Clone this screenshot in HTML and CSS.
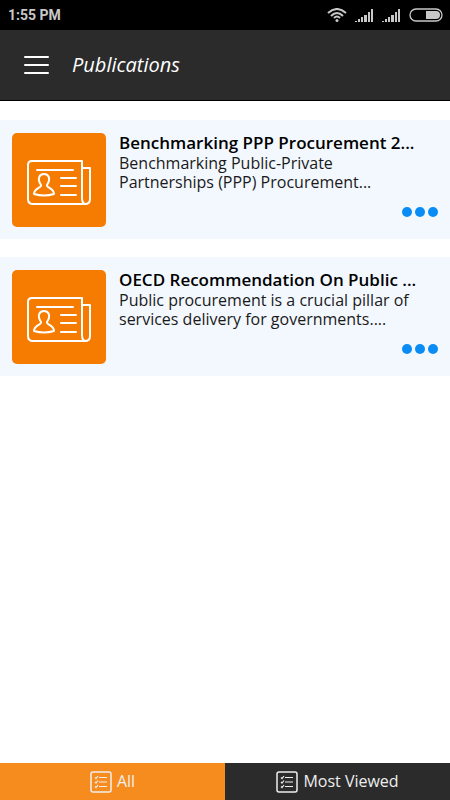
FILE: index.html
```html
<!DOCTYPE html>
<html lang="en">
<head>
  <meta charset="UTF-8">
  <meta name="viewport" content="width=device-width, initial-scale=1.0">
  <title>Publications</title>
  <link rel="stylesheet" href="styles.css">
</head>
<body>

  <!-- Shared icons -->
  <svg class="icon-defs" aria-hidden="true">
    <symbol id="newspaper" viewBox="0 0 94 94">
      <g fill="none" stroke="#fff" stroke-width="2" stroke-linecap="round" stroke-linejoin="round">
        <path d="M70 65V28H20Q16 28 16 32V66Q16 71 21 71H73Q78 71 78 66V35H71M70 65Q70 71 74 71"/>
        <path d="M25 37H61M49 45H64M49 53H64M49 62H64"/>
        <path d="M29 52C25 46 27 41 32 41S39 46 35 52C34 55 42 55 42 61Q32 64 22 61C22 55 30 55 29 52Z"/>
      </g>
    </symbol>
    <symbol id="checklist" viewBox="0 0 22 22">
      <g fill="none" stroke="currentColor">
        <rect x="1" y="1" width="20" height="20" rx="2" stroke-width="1.5"/>
        <path d="M9 6.5H17M9 11H17M9 15.5H17M5 6.5L6 7.5L8 5M5 11L6 12L8 9.500M5 15.5L6 16.5L8 14" stroke-width="1.2"/>
      </g>
    </symbol>
    <symbol id="signal" viewBox="0 0 19 14">
      <path d="M0 14V13H2V14ZM3 14V11H5V14ZM6 14V9H8V14ZM9 14V7H12V14ZM13 14V4H15V14ZM16 14V1H18V14Z" fill="#c8c8c8"/>
    </symbol>
  </svg>

  <div class="app">
    <!-- Status bar -->
    <div class="status-bar">
      <span class="time">1:55 PM</span>
      <div class="status-icons">
        <svg width="20" height="14" viewBox="0 0 20 14" fill="none" stroke="#c8c8c8" stroke-width="2">
          <path d="M1 5Q10 -3 19 5M4 8Q10 2 16 8M7 10Q10 7 13 10"/>
          <circle cx="10" cy="12.500" r="1.500" fill="#c8c8c8" stroke="none"/>
        </svg>
        <svg width="19" height="14"><use href="#signal"/></svg>
        <svg width="19" height="14"><use href="#signal"/></svg>
        <svg width="34" height="14" viewBox="0 0 34 14">
          <rect x="1" y="1" width="32" height="12" rx="6" fill="none" stroke="#c8c8c8" stroke-width="1.300"/>
          <path d="M17 3H27Q31 3 31 7T27 11H17Z" fill="#c8c8c8"/>
        </svg>
      </div>
    </div>

    <!-- Header -->
    <header class="header">
      <button class="menu-btn" type="button" aria-label="Menu">
        <span></span>
        <span></span>
        <span></span>
      </button>
      <h1>Publications</h1>
    </header>

    <!-- Publication list -->
    <main class="list">
      <article class="card">
        <div class="thumb"><svg><use href="#newspaper"/></svg></div>
        <div class="card-body">
          <h2>Benchmarking PPP Procurement 2...</h2>
          <p>Benchmarking Public-Private Partnerships (PPP) Procurement...</p>
          <button class="more-btn" type="button" aria-label="More options">
            <span></span>
            <span></span>
            <span></span>
          </button>
        </div>
      </article>

      <article class="card">
        <div class="thumb"><svg><use href="#newspaper"/></svg></div>
        <div class="card-body">
          <h2>OECD Recommendation On Public ...</h2>
          <p>Public procurement is a crucial pillar of services delivery for governments....</p>
          <button class="more-btn" type="button" aria-label="More options">
            <span></span>
            <span></span>
            <span></span>
          </button>
        </div>
      </article>
    </main>

    <!-- Bottom tabs -->
    <nav class="tabs">
      <button class="tab active" type="button">
        <svg><use href="#checklist"/></svg>
        <span>All</span>
      </button>
      <button class="tab" type="button">
        <svg><use href="#checklist"/></svg>
        <span>Most Viewed</span>
      </button>
    </nav>
  </div>

</body>
</html>
```
FILE: styles.css
```css
* {
  box-sizing: border-box;
}

body {
  margin: 0;
  font-family: "Open Sans", sans-serif;
  background-color: #fff;
  color: #1a1a1a;
}

button {
  padding: 0;
  border: none;
  background: none;
  font-family: inherit;
  cursor: pointer;
}

.icon-defs {
  display: none;
}

.app {
  display: flex;
  flex-direction: column;
  min-height: 100vh;
}

/* Status bar */
.status-bar {
  display: flex;
  justify-content: space-between;
  align-items: center;
  height: 30px;
  padding: 0 7px 0 8px;
  background-color: #000;
}

.time {
  font-family: Roboto, sans-serif;
  font-size: 14px;
  font-weight: bold;
  color: #c8c8c8;
}

.status-icons {
  display: flex;
  align-items: center;
  gap: 8px;
}

/* Header */
.header {
  display: flex;
  align-items: center;
  gap: 23px;
  height: 71px;
  padding: 0 24px;
  background-color: #2b2b2b;
  border-bottom: 1px solid #000;
}

.menu-btn {
  display: flex;
  flex-direction: column;
  gap: 6px;
  width: 25px;
}

.menu-btn span {
  height: 2px;
  border-radius: 1px;
  background-color: #fff;
}

.header h1 {
  margin: 0;
  font-size: 20px;
  font-weight: normal;
  font-style: italic;
  line-height: 26px;
  color: #fff;
}

/* Publication list */
.list {
  display: flex;
  flex-direction: column;
  flex: 1;
  gap: 18px;
  padding: 19px 0;
}

.card {
  display: flex;
  gap: 13px;
  padding: 13px 12px 12px;
  background-color: #f3f8ff;
}

.thumb {
  flex: none;
  width: 94px;
  height: 94px;
  border-radius: 5px;
  background-color: #f57c00;
}

.thumb svg {
  display: block;
  width: 100%;
  height: 100%;
}

.card-body {
  display: flex;
  flex-direction: column;
  flex: 1;
  min-width: 0;
}

.card-body h2 {
  margin: 0 0 2px;
  font-size: 17px;
  font-weight: 600;
  line-height: 19px;
  color: #000;
}

.card-body p {
  margin: 0;
  padding-right: 16px;
  font-size: 16px;
  line-height: 19px;
}

.more-btn {
  display: flex;
  align-self: flex-end;
  gap: 3px;
  margin-top: auto;
  margin-bottom: 10px;
}

.more-btn span {
  width: 10px;
  height: 10px;
  border-radius: 50%;
  background-color: #0a8cf5;
}

/* Bottom tabs */
.tabs {
  display: flex;
  position: sticky;
  bottom: 0;
}

.tab {
  display: flex;
  flex: 1;
  justify-content: center;
  align-items: center;
  gap: 5px;
  height: 37px;
  background-color: #2b2b2b;
  font-size: 16px;
  line-height: 22px;
  color: #eee;
}

.tab span {
  padding-bottom: 2px;
}

.tab svg {
  width: 22px;
  height: 22px;
}

.tab.active {
  background-color: #f68c1e;
}
```
